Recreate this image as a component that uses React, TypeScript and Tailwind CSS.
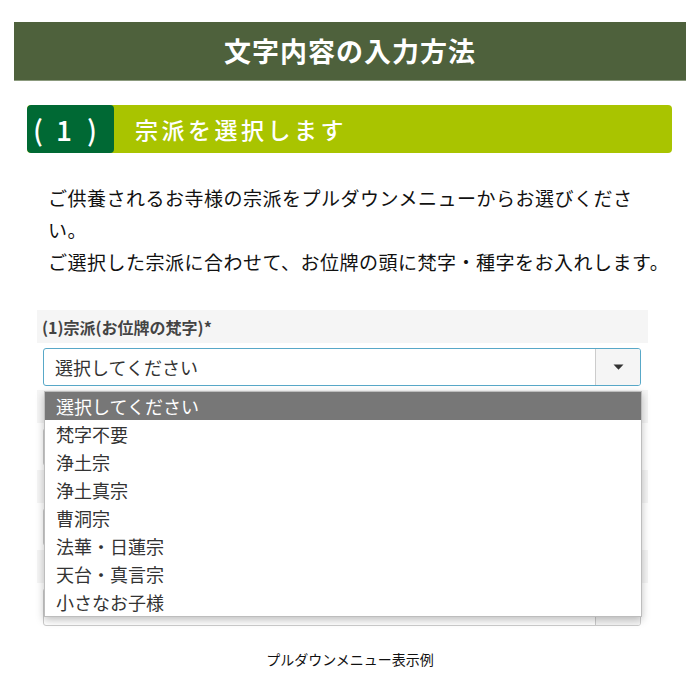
import React from 'react';

const FONT = { fontFamily: '"Noto Sans CJK JP", "Noto Sans", sans-serif' };

const OPTIONS = ['選択してください', '梵字不要', '浄土宗', '浄土真宗', '曹洞宗', '法華・日蓮宗', '天台・真言宗', '小さなお子様'];

const Caret = () => (
    <svg width="11" height="6" viewBox="0 0 11 6" className="block">
        <path d="M0.5 0.5 L10.5 0.5 L5.5 5.8 Z" fill="#333" />
    </svg>
);

const SelectBox: React.FC<{ focused?: boolean; label?: string }> = ({ focused, label }) => (
    <div
        className={`ml-[6px] w-[598px] h-[38px] rounded-[3px] border flex bg-white overflow-hidden ${focused ? 'border-[#58a8c8]' : 'border-[#cccccc]'}`}
    >
        <div className="flex-1 flex items-center pl-[11px] text-[18px] text-[#333]">{label}</div>
        <div className="w-[45px] h-full bg-[#f5f5f5] border-l border-[#cccccc] flex items-center justify-center">
            <Caret />
        </div>
    </div>
);

const FormRow: React.FC<{ label?: string; focused?: boolean; value?: string; first?: boolean }> = ({ label, focused, value, first }) => (
    <div className={first ? '' : 'mt-[4px]'}>
        <div className="h-[33px] bg-[#f5f5f5] flex items-center pl-[5px] text-[16px] font-bold text-[#444]">{label}</div>
        <div className="mt-[5px]">
            <SelectBox focused={focused} label={value} />
        </div>
    </div>
);

export default function App() {
    return (
        <div className="w-[700px] h-[700px] bg-white relative overflow-hidden" style={FONT}>
            <div className="pt-[22px] px-[14px]">
                <div className="h-[59px] bg-[#4e613c] border-b border-[#8b9a7d] flex items-center justify-center">
                    <span className="text-white text-[27px] font-bold tracking-[1px]">文字内容の入力方法</span>
                </div>
            </div>

            <div className="mt-[24px] ml-[27px] w-[645px] h-[48px] rounded-[4px] overflow-hidden flex bg-[#a9c400]">
                <div className="w-[87px] h-full bg-[#006934] rounded-[4px] flex items-center pl-[6px] text-white text-[28px] font-medium">
                    <span>(</span>
                    <span className="ml-[13px] mr-[15px]">1</span>
                    <span>)</span>
                </div>
                <div className="flex items-center pl-[21px] text-white text-[23px] font-medium tracking-[3.5px]">宗派を選択します</div>
            </div>

            <p className="mt-[29px] pl-[48px] text-[19px] leading-[32px] tracking-[0.5px] text-[#111] whitespace-nowrap">
                ご供養されるお寺様の宗派をプルダウンメニューからお選びくださ
                <br />
                い。
                <br />
                ご選択した宗派に合わせて、お位牌の頭に梵字・種字をお入れします。
            </p>

            <div className="mt-[32px] ml-[37px] w-[611px] relative">
                <FormRow first focused label="(1)宗派(お位牌の梵字)*" value="選択してください" />
                <FormRow />
                <FormRow />
                <FormRow />

                {/* open dropdown list */}
                <div className="absolute top-[81px] left-[7px] w-[598px] bg-white border border-[#bdbdbd] shadow-[0_3px_8px_rgba(0,0,0,0.25)] z-10">
                    {OPTIONS.map((opt, i) => (
                        <div
                            key={opt}
                            className={`h-[28px] flex items-center pl-[11px] text-[18px] ${i === 0 ? 'bg-[#777777] text-white' : 'text-[#333]'}`}
                        >
                            {opt}
                        </div>
                    ))}
                </div>
            </div>

            <div className="mt-[23px] text-center text-[14px] leading-[20px] text-[#111]">プルダウンメニュー表示例</div>
        </div>
    );
}
